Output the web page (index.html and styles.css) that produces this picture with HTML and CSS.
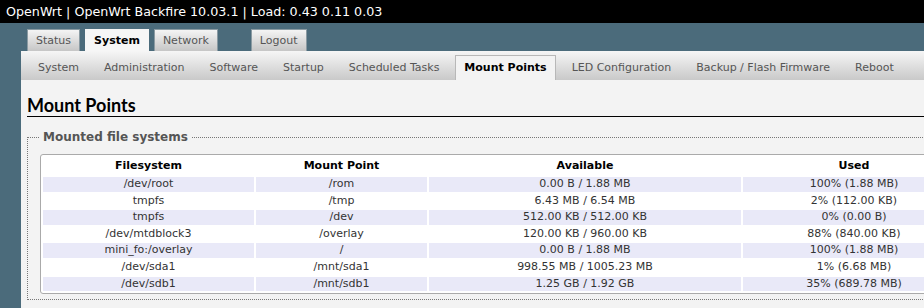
FILE: index.html
```html
<!DOCTYPE html>
<html lang="en">
<head>
    <meta charset="UTF-8">
    <title>OpenWrt - System - Mount Points</title>
    <link rel="stylesheet" href="styles.css">
</head>
<body>

    <!-- Header -->
    <div class="header">OpenWrt | OpenWrt Backfire 10.03.1 | Load: 0.43 0.11 0.03</div>

    <!-- Main tabs -->
    <ul class="tabs">
        <li class="tab">Status</li>
        <li class="tab tab-active">System</li>
        <li class="tab">Network</li>
        <li class="tab tab-logout">Logout</li>
    </ul>

    <div class="content">
        <!-- Sub menu -->
        <ul class="submenu">
            <li class="sub">System</li>
            <li class="sub">Administration</li>
            <li class="sub">Software</li>
            <li class="sub">Startup</li>
            <li class="sub">Scheduled Tasks</li>
            <li class="sub sub-active">Mount Points</li>
            <li class="sub">LED Configuration</li>
            <li class="sub">Backup / Flash Firmware</li>
            <li class="sub">Reboot</li>
        </ul>

        <div class="page">
            <h2 class="title">Mount Points</h2>

            <fieldset class="section">
                <legend class="section-title">Mounted file systems</legend>
                <table class="mounts">
                    <colgroup>
                        <col class="c-fs">
                        <col class="c-mp">
                        <col class="c-av">
                        <col class="c-used">
                    </colgroup>
                    <tr>
                        <th>Filesystem</th>
                        <th>Mount Point</th>
                        <th>Available</th>
                        <th>Used</th>
                    </tr>
                    <tr class="odd"><td>/dev/root</td><td>/rom</td><td>0.00 B / 1.88 MB</td><td>100% (1.88 MB)</td></tr>
                    <tr><td>tmpfs</td><td>/tmp</td><td>6.43 MB / 6.54 MB</td><td>2% (112.00 KB)</td></tr>
                    <tr class="odd"><td>tmpfs</td><td>/dev</td><td>512.00 KB / 512.00 KB</td><td>0% (0.00 B)</td></tr>
                    <tr><td>/dev/mtdblock3</td><td>/overlay</td><td>120.00 KB / 960.00 KB</td><td>88% (840.00 KB)</td></tr>
                    <tr class="odd"><td>mini_fo:/overlay</td><td>/</td><td>0.00 B / 1.88 MB</td><td>100% (1.88 MB)</td></tr>
                    <tr><td>/dev/sda1</td><td>/mnt/sda1</td><td>998.55 MB / 1005.23 MB</td><td>1% (6.68 MB)</td></tr>
                    <tr class="odd"><td>/dev/sdb1</td><td>/mnt/sdb1</td><td>1.25 GB / 1.92 GB</td><td>35% (689.78 MB)</td></tr>
                </table>
            </fieldset>
        </div>
    </div>

</body>
</html>
```

FILE: styles.css
```css
/* OpenWrt LuCI - Mount Points */
html, body {
    overflow: hidden;
}

body {
    margin: 0;
    height: 308px;
    background-color: #4b6b7b;
    font-family: 'DejaVu Sans', Verdana, sans-serif;
    font-size: 11px;
    color: #333;
}

ul {
    list-style: none;
    margin: 0;
    padding: 0;
}

.header {
    background-color: #000;
    color: #fff;
    height: 23px;
    line-height: 23px;
    padding-left: 6px;
    font-size: 12.7px;
    white-space: nowrap;
}

/* Main tabs */
.tabs {
    display: flex;
    gap: 5px;
    padding: 6px 0 0 27px;
}

.tab {
    height: 21px;
    line-height: 22px;
    padding: 0 8px;
    border: 1px solid #8a9aa2;
    border-bottom: none;
    background: linear-gradient(#f4f4f4, #c6c6c6);
    color: #555;
}

.tab-active {
    background: #f6f6f6;
    color: #000;
    font-weight: bold;
    border-color: #f6f6f6;
}

.tab-logout {
    margin-left: 28px;
}

/* Content */
.content {
    margin-left: 21px;
    width: 1000px;
    height: 257px;
    overflow: hidden;
    background-color: #f3f3f3;
}

.submenu {
    display: flex;
    align-items: flex-end;
    gap: 7px;
    height: 29px;
    padding-left: 8px;
    background: linear-gradient(#f6f6f6, #c9c9c9);
}

.sub {
    height: 24px;
    line-height: 24px;
    padding: 0 8px;
    color: #555;
    border: 1px solid transparent;
    border-bottom: none;
}

.sub-active {
    background-color: #f3f3f3;
    border-color: #b8b8b8;
    color: #000;
    font-weight: bold;
}

.page {
    padding: 14px 0 0 6px;
}

.title {
    margin: 0;
    font-family: Lato, 'Liberation Sans', sans-serif;
    font-size: 18px;
    font-weight: bold;
    color: #000;
    line-height: 22px;
    border-bottom: 1px solid #000;
}

.section {
    margin: 12px 0 0 0;
    padding: 0 12px 5px 12px;
    border: 1px dotted #777;
}

.section-title {
    padding: 0 3px;
    font-size: 12px;
    line-height: 16px;
    font-weight: bold;
    color: #555;
}

.mounts {
    margin-top: 9px;
    background-color: #fff;
    border: 1px solid #aaa;
    border-radius: 3px;
    border-spacing: 2px;
    table-layout: fixed;
    width: 928px;
}

.c-fs { width: 211px; }
.c-mp { width: 171px; }
.c-av { width: 312px; }
.c-used { width: 222px; }

.mounts th {
    height: 18px;
    line-height: 18px;
    padding: 0;
    color: #000;
    font-weight: bold;
}

.mounts td {
    height: 14.6px;
    line-height: 14.6px;
    padding: 0;
    text-align: center;
    white-space: nowrap;
}

.mounts .odd td {
    background-color: #e9e9f8;
}
```
